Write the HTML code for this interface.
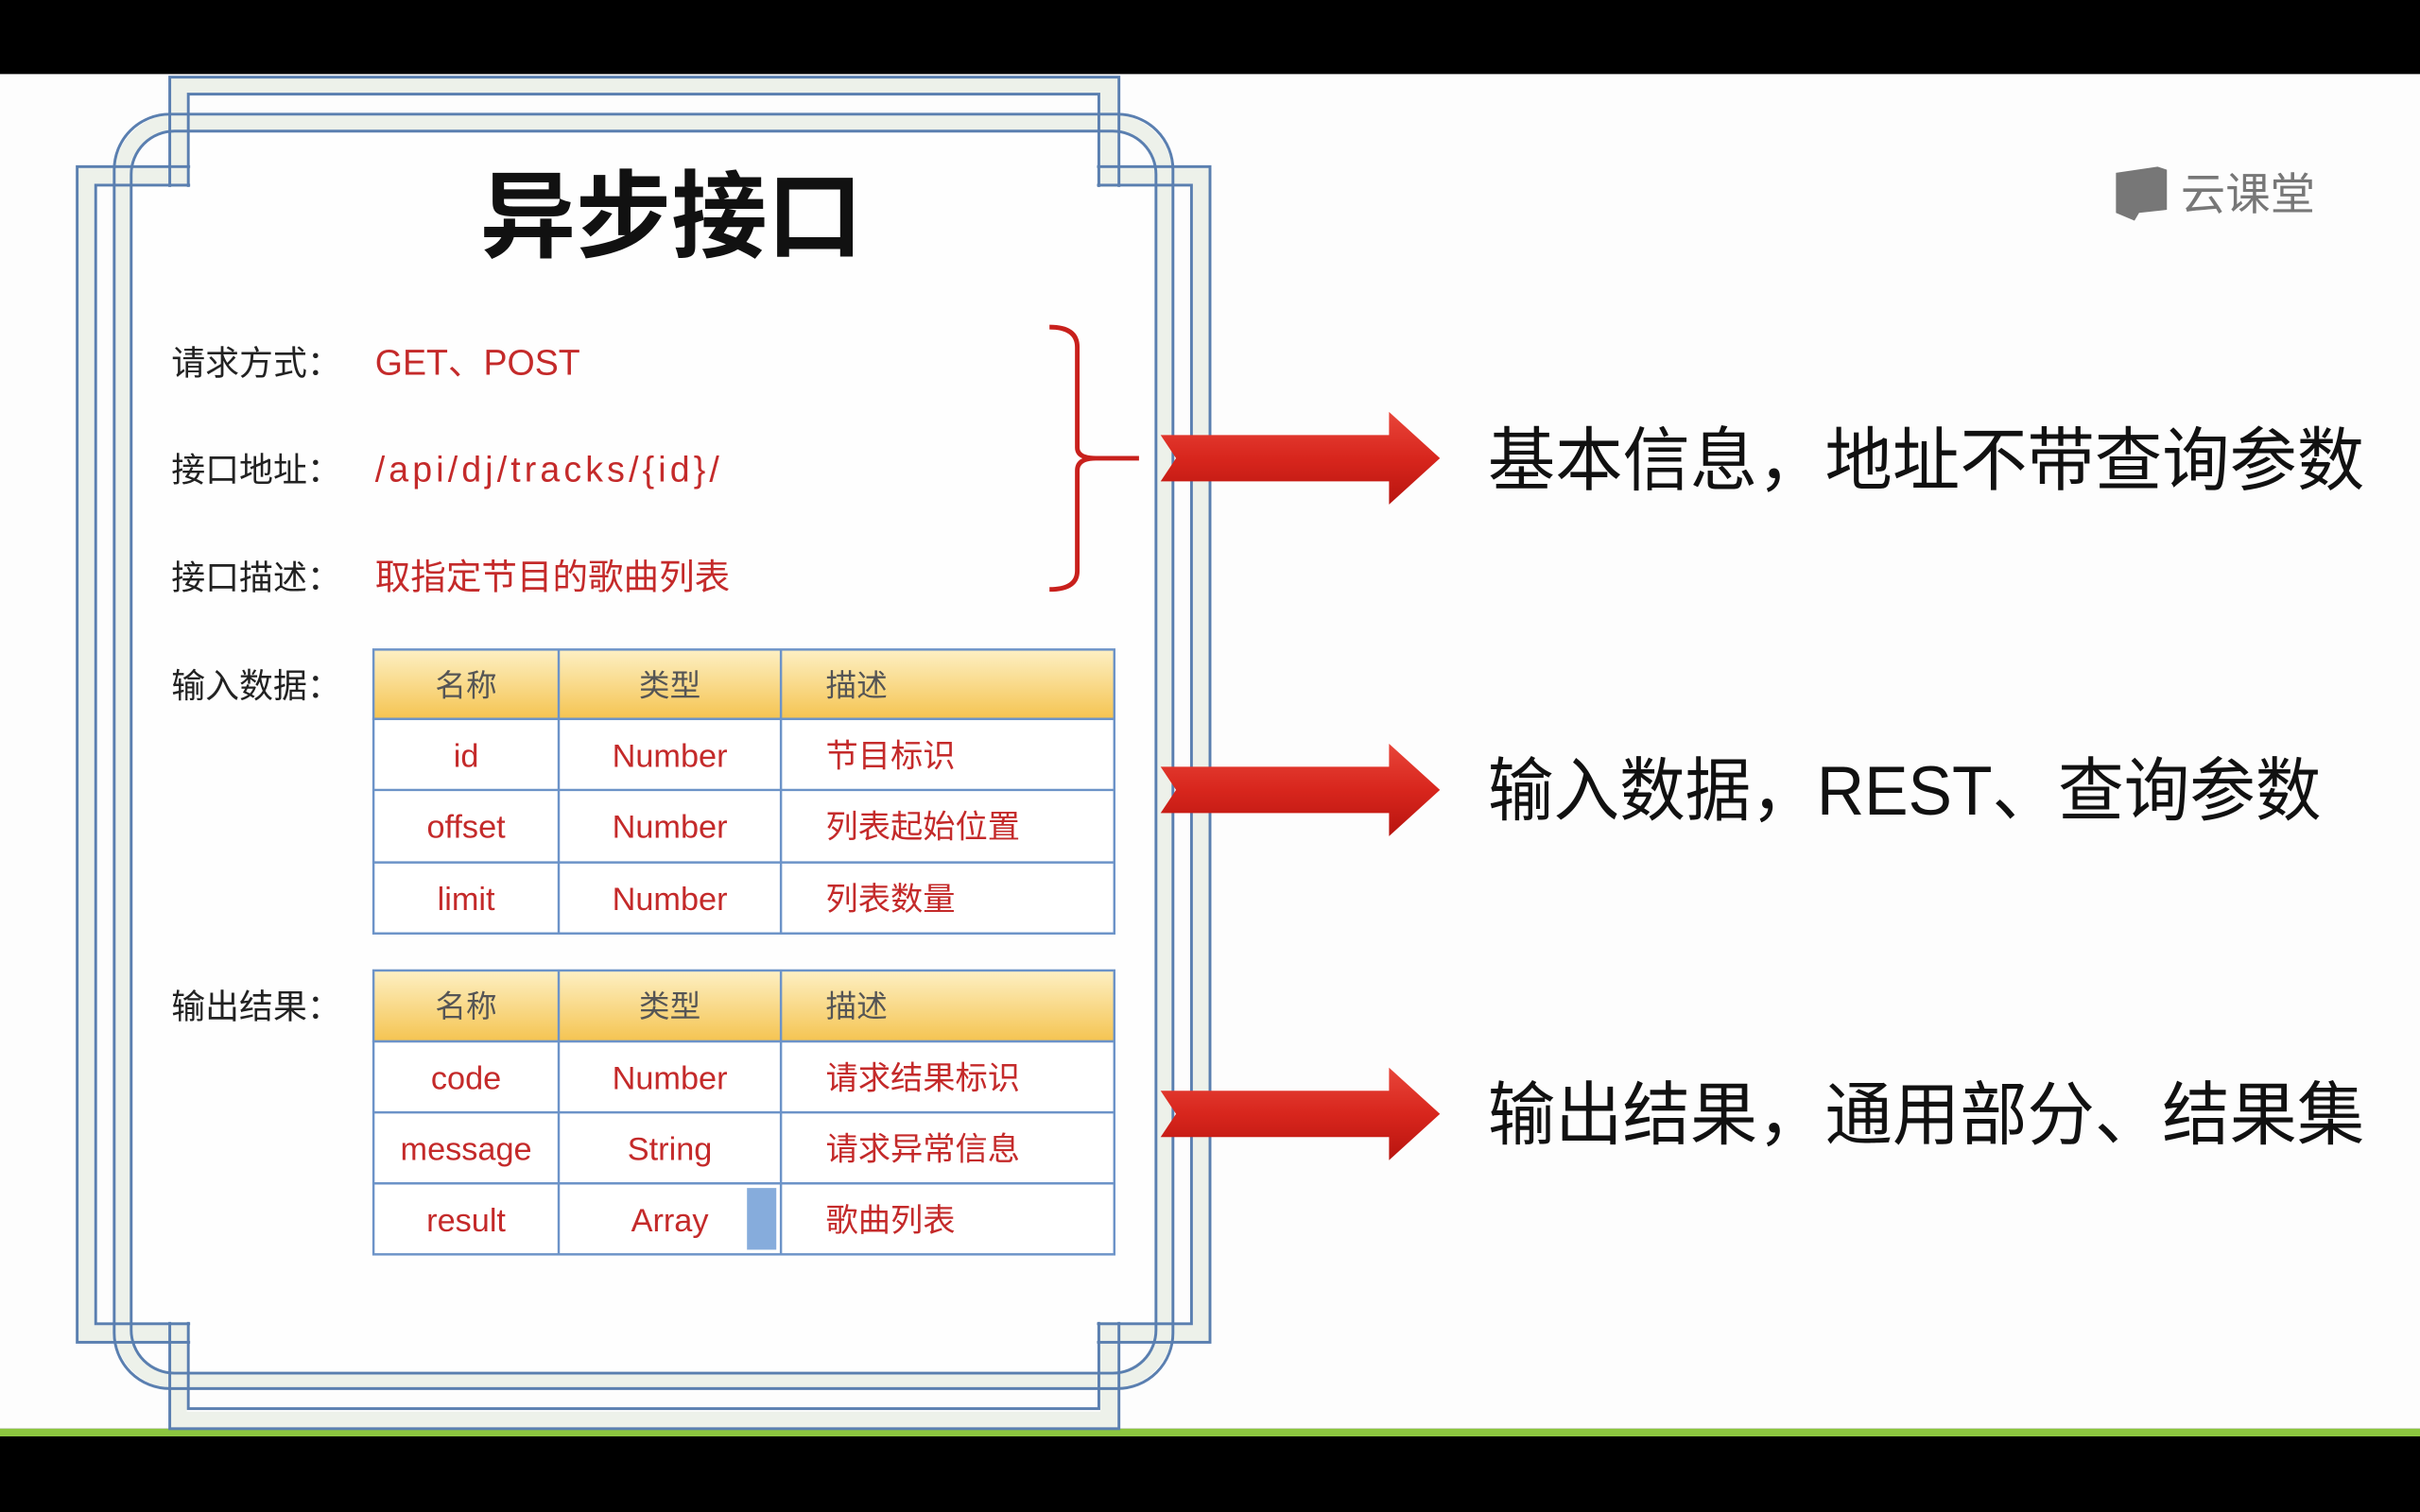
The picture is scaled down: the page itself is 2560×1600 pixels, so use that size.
<!DOCTYPE html>
<html><head><meta charset="utf-8"><style>
html,body{margin:0;padding:0;background:#000;}
svg{display:block;}
.cn{font-family:"Liberation Sans","Noto Sans CJK SC",sans-serif;}
</style></head><body>
<svg width="2560" height="1600" viewBox="0 0 1568 980" preserveAspectRatio="none" xmlns="http://www.w3.org/2000/svg" class="cn">
<defs>
<linearGradient id="hd" x1="0" y1="0" x2="0" y2="1"><stop offset="0" stop-color="#fdf0c4"/><stop offset="1" stop-color="#f5c451"/></linearGradient>
<linearGradient id="ar" x1="0" y1="0" x2="0" y2="1"><stop offset="0" stop-color="#e8453a"/><stop offset="0.5" stop-color="#d8261d"/><stop offset="1" stop-color="#b8140f"/></linearGradient>
</defs>
<rect x="0" y="0" width="1568" height="980" fill="#000"/>
<rect x="0" y="48" width="1568" height="878" fill="#fdfdfd"/>
<rect x="0" y="926" width="1568" height="5" fill="#8cc63f"/>
<g fill="none" stroke="#edf1ea" stroke-width="11">
<rect x="115.5" y="55.5" width="603" height="865"/>
<rect x="55.5" y="113.5" width="723" height="751"/>
<rect x="79.5" y="79.5" width="675" height="815" rx="34"/>
</g>
<g fill="none" stroke="#5a7fb0" stroke-width="1.8">
<rect x="110" y="50" width="615" height="876"/>
<rect x="122" y="61" width="590" height="852"/>
<rect x="50" y="108" width="734" height="762"/>
<rect x="62" y="120" width="710" height="738"/>
<rect x="74" y="74" width="686" height="826" rx="36"/>
<rect x="85" y="85" width="664" height="805" rx="28"/>
</g>
<rect x="86.5" y="121.2" width="661" height="735.6" fill="#fefefe"/>
<rect x="123.2" y="86.5" width="587.6" height="36" fill="#fefefe"/>
<rect x="123.2" y="855" width="587.6" height="34" fill="#fefefe"/>
<text x="435" y="162" font-size="62" font-weight="bold" text-anchor="middle" fill="#111">异步接口</text>
<g font-size="22" fill="#222">
<text x="111" y="243">请求方式：</text>
<text x="111" y="312">接口地址：</text>
<text x="111" y="382">接口描述：</text>
<text x="111" y="452">输入数据：</text>
<text x="111" y="660">输出结果：</text>
</g>
<g font-size="23" fill="#c42a2a">
<text x="243" y="243">GET、POST</text>
<text x="243" y="312" textLength="223">/api/dj/tracks/{id}/</text>
<text x="243" y="382">取指定节目的歌曲列表</text>
</g>
<path d="M680 212 Q698 212 698 225 L698 290 Q698 297 710 297 L738 297 M710 297 Q698 297 698 305 L698 370 Q698 382 680 382" fill="none" stroke="#c8201c" stroke-width="3"/>
<g stroke="#6c93c8" stroke-width="1.5">
<rect x="242" y="421" width="480" height="45" fill="url(#hd)"/>
<rect x="242" y="466" width="480" height="139" fill="#fff"/>
<line x1="242" y1="512" x2="722" y2="512"/><line x1="242" y1="559" x2="722" y2="559"/>
<line x1="362" y1="421" x2="362" y2="605"/><line x1="506" y1="421" x2="506" y2="605"/>
<rect x="242" y="629" width="480" height="46" fill="url(#hd)"/>
<rect x="242" y="675" width="480" height="138" fill="#fff"/>
<line x1="242" y1="721" x2="722" y2="721"/><line x1="242" y1="767" x2="722" y2="767"/>
<line x1="362" y1="629" x2="362" y2="813"/><line x1="506" y1="629" x2="506" y2="813"/>
</g>
<rect x="484" y="770" width="19" height="40" fill="#86acdc"/>
<g font-size="20" fill="#555" text-anchor="middle">
<text x="302" y="451">名称</text><text x="434" y="451">类型</text><text x="555" y="451">描述</text>
<text x="302" y="659">名称</text><text x="434" y="659">类型</text><text x="555" y="659">描述</text>
</g>
<g font-size="21" fill="#c42a2a">
<g text-anchor="middle">
<text x="302" y="497">id</text><text x="434" y="497">Number</text>
<text x="302" y="543">offset</text><text x="434" y="543">Number</text>
<text x="302" y="590">limit</text><text x="434" y="590">Number</text>
<text x="302" y="706">code</text><text x="434" y="706">Number</text>
<text x="302" y="752">message</text><text x="434" y="752">String</text>
<text x="302" y="798">result</text><text x="434" y="798">Array</text>
</g>
<text x="535" y="497">节目标识</text><text x="535" y="543">列表起始位置</text><text x="535" y="590">列表数量</text>
<text x="535" y="706">请求结果标识</text><text x="535" y="752">请求异常信息</text><text x="535" y="798">歌曲列表</text>
</g>
<g fill="url(#ar)">
<path d="M752 282 L900 282 L900 267 L933 297 L900 327 L900 312 L752 312 L762 297 Z"/>
<path d="M752 497 L900 497 L900 482 L933 512 L900 542 L900 527 L752 527 L762 512 Z"/>
<path d="M752 707 L900 707 L900 692 L933 722 L900 752 L900 737 L752 737 L762 722 Z"/>
</g>
<g font-size="45" fill="#111">
<text x="964" y="314" textLength="568" lengthAdjust="spacingAndGlyphs">基本信息，地址不带查询参数</text>
<text x="964" y="528" textLength="540" lengthAdjust="spacingAndGlyphs">输入数据，REST、查询参数</text>
<text x="964" y="738" textLength="568" lengthAdjust="spacingAndGlyphs">输出结果，通用部分、结果集</text>
</g>
<path d="M1371 112 L1398 108 L1404 110 L1404 136 L1386 138 L1383 143 L1371 138 Z" fill="#777"/>
<text x="1413" y="136" font-size="29" fill="#777">云课堂</text>
</svg>
</body></html>
